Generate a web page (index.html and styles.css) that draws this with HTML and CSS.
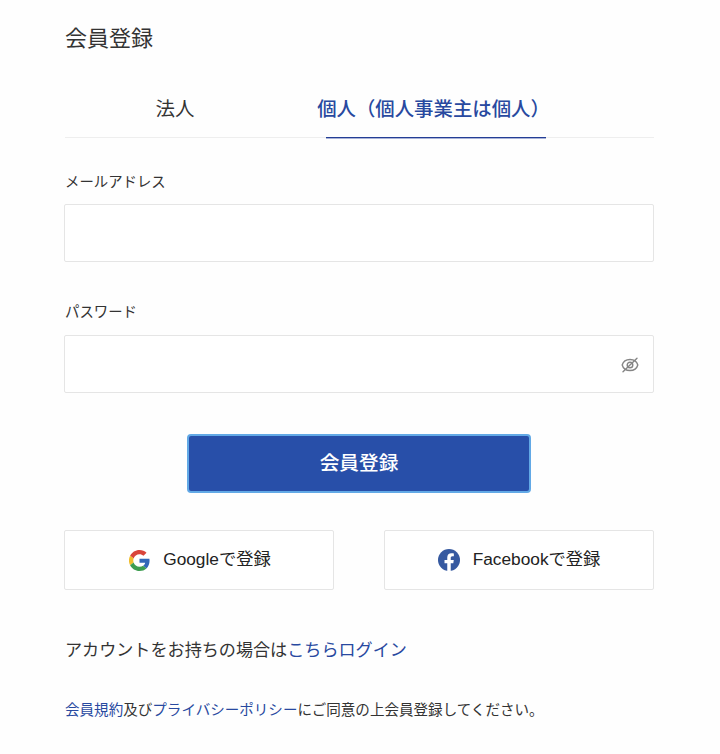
FILE: index.html
```html
<!DOCTYPE html>
<html lang="ja">
<head>
<meta charset="utf-8">
<title>会員登録</title>
<link rel="stylesheet" href="styles.css">
</head>
<body>
<main class="page">
  <h1 class="title"><span>会員登録</span></h1>
  <nav class="tabs">
    <a class="tab"><span>法人</span></a>
    <a class="tab active"><span>個人（個人事業主は個人）</span></a>
  </nav>
  <form class="form">
    <label class="label" for="email"><span>メールアドレス</span></label>
    <div class="field"><input id="email" type="email"></div>
    <label class="label second" for="password"><span>パスワード</span></label>
    <div class="field">
      <input id="password" type="password">
      <svg class="eye" viewBox="0 0 18 16" width="18" height="16" fill="none" stroke="#858585" stroke-width="1.4" stroke-linecap="round">
        <path d="M1.200 8C2.200 4.400 5.400 2.500 9 2.500s6.800 1.900 7.800 5.500c-1 3.600-4.200 5.500-7.800 5.500S2.200 11.600 1.200 8z"/>
        <circle cx="9" cy="8" r="2.800"/>
        <path d="M16 1.300L2 14.700"/>
      </svg>
    </div>
    <button class="submit" type="button"><span>会員登録</span></button>
  </form>
  <div class="social">
    <button class="provider google" type="button">
      <svg viewBox="0 0 48 48" width="21" height="21">
        <path fill="#d9453a" d="M24 9.500c3.540 0 6.710 1.220 9.210 3.600l6.850-6.850C35.900 2.380 30.470 0 24 0 14.620 0 6.510 5.380 2.560 13.220l7.980 6.190C12.430 13.720 17.740 9.500 24 9.500z"/>
        <path fill="#3268b8" d="M46.980 24.550c0-1.570-.15-3.090-.38-4.550H24v9.020h12.940c-.58 2.960-2.260 5.480-4.780 7.180l7.730 6c4.510-4.180 7.090-10.360 7.090-17.650z"/>
        <path fill="#f0bd2e" d="M10.530 28.590a14.500 14.500 0 0 1 0-9.180l-7.980-6.190a24 24 0 0 0 0 21.560z"/>
        <path fill="#3d9d50" d="M24 48c6.480 0 11.930-2.130 15.890-5.810l-7.730-6c-2.150 1.450-4.920 2.300-8.160 2.300-6.260 0-11.570-4.220-13.470-9.910l-7.980 6.190C6.510 42.620 14.620 48 24 48z"/>
      </svg>
      <span>Googleで登録</span>
    </button>
    <button class="provider facebook" type="button">
      <svg viewBox="0 0 24 24" width="22" height="22">
        <circle cx="12" cy="12" r="12" fill="#3659a0"/>
        <path fill="#fff" d="M10.100 23.900v-8.400H7.100V12h3V9.400c0-3 1.800-4.700 4.500-4.700 1.300 0 2.700.2 2.700.2v3h-1.500c-1.500 0-1.900.9-1.900 1.900V12h3.300l-.5 3.500h-2.800v8.400z"/>
      </svg>
      <span>Facebookで登録</span>
    </button>
  </div>
  <p class="login"><span>アカウントをお持ちの場合は<a>こちらログイン</a></span></p>
  <p class="terms"><span><a>会員規約</a>及び<a>プライバシーポリシー</a>にご同意の上会員登録してください。</span></p>
</main>
</body>
</html>
```

FILE: styles.css
```css
* { box-sizing: border-box; }
body {
  margin: 0;
  background: #fefefe;
  color: #333;
  font-family: "Liberation Sans", "Noto Sans CJK JP", sans-serif;
}
.page { width: 590px; margin-left: 64px; padding-top: 23px; }
.title { margin: 0; padding-left: 1px; font-size: 22px; font-weight: 400; line-height: 32px; height: 32px; }
.tabs {
  display: grid;
  grid-template-columns: 220px 220px;
  column-gap: 41px;
  margin: 27px 0 0 1px;
  height: 56px;
  border-bottom: 1px solid #eeeeee;
}
.tab {
  display: flex;
  justify-content: center;
  height: 56px;
  font-size: 19.500px;
  line-height: 55px;
  white-space: nowrap;
}
.tab.active {
  padding-right: 5px;
  color: #2849a0;
  font-size: 19.400px;
  font-weight: 500;
  border-bottom: 1px solid #243e95;
  box-shadow: 0 1px 0 #a9b3d8;
}
.form { display: flex; flex-direction: column; }
.label { margin-top: 34px; padding-left: 1px; font-size: 14.400px; line-height: 20px; height: 20px; }
.label.second { margin-top: 40px; }
.field {
  display: flex;
  align-items: center;
  height: 58px;
  margin-top: 12px;
  padding-right: 14px;
  border: 1px solid #e5e5e5;
  border-radius: 2px;
  background: #fff;
}
.label.second + .field { margin-top: 13px; }
.eye { margin-top: 1px; }
.field input { flex: 1; height: 100%; border: 0; outline: 0; background: transparent; }
.submit {
  align-self: center;
  width: 344px;
  height: 59px;
  margin-top: 41px;
  border: 2px solid #62a9e6;
  border-radius: 4px;
  background: #284fa9;
  color: #fff;
  font: 500 19.700px/1 "Liberation Sans", "Noto Sans CJK JP", sans-serif;
}
.social { display: grid; grid-template-columns: 270px 270px; justify-content: space-between; margin-top: 37px; }
.provider {
  display: flex;
  align-items: center;
  justify-content: center;
  gap: 13px;
  height: 60px;
  padding: 0;
  border: 1px solid #e5e5e5;
  border-radius: 2px;
  background: #fff;
  color: #222;
  font: 400 17.300px/1 "Liberation Sans", "Noto Sans CJK JP", sans-serif;
}
.google { padding-left: 2px; }
.login { margin: 48px 0 0; padding-left: 1px; font-size: 17.100px; line-height: 26px; height: 26px; }
.terms { margin: 35px 0 0; padding-left: 1px; font-size: 14.550px; line-height: 22px; height: 22px; }
.login, .terms { white-space: nowrap; }
.login a, .terms a { color: #2849a0; }
```
